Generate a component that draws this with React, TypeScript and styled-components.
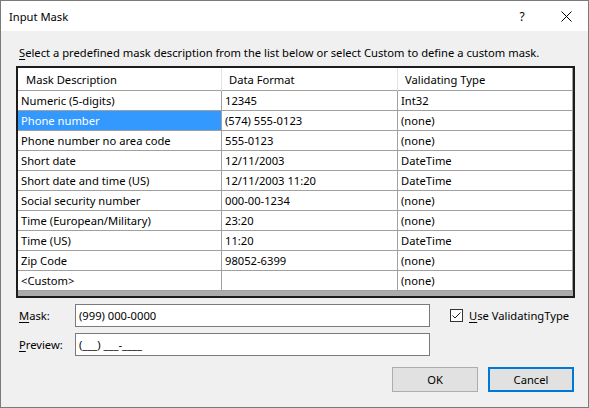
import React from "react";
import styled, { createGlobalStyle } from "styled-components";

const FONT = `"Noto Sans", "Segoe UI", sans-serif`;

const Global = createGlobalStyle`
  html, body { margin: 0; padding: 0; background: #ffffff; }
  body { font-family: ${FONT}; font-size: 11.2px; color: #000; }
  * { box-sizing: border-box; }
`;

const Window = styled.div`
  width: 589px;
  height: 408px;
  border: 1px solid #7a7a7a;
  display: flex;
  flex-direction: column;
  background: #f0f0f0;
`;

const TitleBar = styled.div`
  height: 30px;
  flex-shrink: 0;
  background: #ffffff;
  display: flex;
  align-items: center;
  padding-left: 8px;
`;

const TitleText = styled.div`
  flex: 1;
  font-size: 11.2px;
`;

const TitleButton = styled.div`
  width: 44px;
  height: 30px;
  display: flex;
  align-items: center;
  justify-content: center;
  font-size: 12px;
  color: #000;
`;

const Body = styled.div`
  flex: 1;
  display: flex;
  flex-direction: column;
  padding: 14px 12px 0 15px;
`;

const Instruction = styled.div`
  margin-left: 3px;
  height: 16px;
  line-height: 16px;
  margin-bottom: 5px;
  white-space: nowrap;
`;

const Grid = styled.div`
  width: 559px;
  height: 232px;
  border: 2px solid #1c1c1c;
  background: #ababab;
  display: grid;
  grid-template-columns: 204px 176px 175px;
  grid-auto-rows: 20px;
  grid-template-rows: 23px;
  align-content: start;
`;

const HeaderCell = styled.div<{ $pad: number }>`
  background: #ffffff;
  border-right: 1px solid #e3e3e3;
  border-bottom: 1px solid #a0a0a0;
  padding-left: ${(p) => p.$pad}px;
  display: flex;
  align-items: center;
  white-space: nowrap;
  &:nth-child(3) {
    border-right-color: #a0a0a0;
  }
`;

const Cell = styled.div<{ $selected?: boolean }>`
  background: ${(p) => (p.$selected ? "#3399ff" : "#ffffff")};
  color: ${(p) => (p.$selected ? "#ffffff" : "#000000")};
  border-right: 1px solid #a0a0a0;
  border-bottom: 1px solid #a0a0a0;
  padding-left: 3px;
  display: flex;
  align-items: center;
  white-space: nowrap;
  overflow: hidden;
`;

const FieldRow = styled.div<{ $gap: number }>`
  display: flex;
  align-items: center;
  height: 23px;
  margin-top: ${(p) => p.$gap}px;
`;

const FieldLabel = styled.div`
  width: 56px;
  margin-left: 3px;
  white-space: nowrap;
`;

const TextBox = styled.div`
  width: 355px;
  height: 23px;
  border: 1px solid #7a7a7a;
  background: #ffffff;
  padding-left: 3px;
  display: flex;
  align-items: center;
  white-space: nowrap;
`;

const CheckGroup = styled.label`
  display: flex;
  align-items: center;
  margin-left: 20px;
  gap: 6px;
  white-space: nowrap;
`;

const CheckBox = styled.span`
  width: 13px;
  height: 13px;
  border: 1px solid #333333;
  background: #ffffff;
  display: flex;
  align-items: center;
  justify-content: center;
`;

const Key = styled.span`
  text-decoration: underline;
  text-underline-offset: 1.5px;
  text-decoration-thickness: 1px;
`;

const ButtonRow = styled.div`
  display: flex;
  justify-content: flex-end;
  gap: 10px;
  margin-top: 11px;
  margin-right: 2px;
`;

const Button = styled.div<{ $default?: boolean }>`
  width: 86px;
  height: 25px;
  background: #e1e1e1;
  border: ${(p) => (p.$default ? "2px solid #0078d7" : "1px solid #adadad")};
  display: flex;
  align-items: center;
  justify-content: center;
  font-size: 11.2px;
`;

const rows: [string, string, string][] = [
  ["Numeric (5-digits)", "12345", "Int32"],
  ["Phone number", "(574) 555-0123", "(none)"],
  ["Phone number no area code", "555-0123", "(none)"],
  ["Short date", "12/11/2003", "DateTime"],
  ["Short date and time (US)", "12/11/2003 11:20", "DateTime"],
  ["Social security number", "000-00-1234", "(none)"],
  ["Time (European/Military)", "23:20", "(none)"],
  ["Time (US)", "11:20", "DateTime"],
  ["Zip Code", "98052-6399", "(none)"],
  ["<Custom>", "", "(none)"],
];

export default function App() {
  return (
    <>
      <Global />
      <Window>
        <TitleBar>
          <TitleText>Input Mask</TitleText>
          <TitleButton>?</TitleButton>
          <TitleButton>
            <svg width="11" height="11" viewBox="0 0 11 11">
              <path d="M0.5 0.5 L10.5 10.5 M10.5 0.5 L0.5 10.5" stroke="#000" strokeWidth="1" />
            </svg>
          </TitleButton>
        </TitleBar>
        <Body>
          <Instruction>
            <Key>S</Key>elect a predefined mask description from the list below or select Custom to define a custom mask.
          </Instruction>
          <Grid>
            <HeaderCell $pad={8}>Mask Description</HeaderCell>
            <HeaderCell $pad={7}>Data Format</HeaderCell>
            <HeaderCell $pad={7}>Validating Type</HeaderCell>
            {rows.map((r, i) => (
              <React.Fragment key={i}>
                <Cell $selected={i === 1}>{r[0]}</Cell>
                <Cell>{r[1]}</Cell>
                <Cell>{r[2]}</Cell>
              </React.Fragment>
            ))}
          </Grid>
          <FieldRow $gap={6}>
            <FieldLabel>
              <Key>M</Key>ask:
            </FieldLabel>
            <TextBox>(999) 000-0000</TextBox>
            <CheckGroup>
              <CheckBox>
                <svg width="11" height="11" viewBox="0 0 11 11">
                  <polyline points="1.5,5.5 4,8 9.5,2.5" fill="none" stroke="#222" strokeWidth="1" />
                </svg>
              </CheckBox>
              <span>
                <Key>U</Key>se ValidatingType
              </span>
            </CheckGroup>
          </FieldRow>
          <FieldRow $gap={6}>
            <FieldLabel>
              <Key>P</Key>review:
            </FieldLabel>
            <TextBox>(___) ___-____</TextBox>
          </FieldRow>
          <ButtonRow>
            <Button>OK</Button>
            <Button $default>Cancel</Button>
          </ButtonRow>
        </Body>
      </Window>
    </>
  );
}
